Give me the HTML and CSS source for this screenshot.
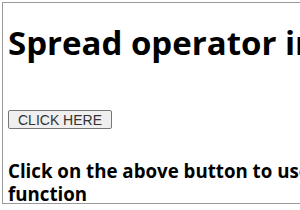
FILE: index.html
```html
<!DOCTYPE html>
<html lang="en">
<head>
    <meta charset="UTF-8">
    <title>Spread operator in function</title>
    <link rel="stylesheet" href="styles.css">
</head>
<body>
    <div class="frame">
        <h1>Spread operator in JavaScript</h1>
        <button class="btn">CLICK HERE</button>
        <h3>Click on the above button to use spread operator in function</h3>
    </div>
</body>
</html>
```

FILE: styles.css
```css
* {
    box-sizing: border-box;
}

body {
    margin: 0;
    background-color: #fff;
    font-family: "Open Sans", "Noto Sans", sans-serif;
    overflow: hidden;
}

.frame {
    margin: 2px 0 0 2px;
    width: 560px;
    height: 202px;
    border: 1px solid #9a9a9a;
    border-right: none;
    padding: 0 0 0 5px;
    overflow: hidden;
}

h1 {
    margin: 17px 0 0;
    font-size: 33px;
    font-weight: 700;
    white-space: nowrap;
    color: #000;
}

.btn {
    margin-top: 45px;
    padding: 1px 9px;
    height: 19px;
    font-family: "Liberation Sans", Arial, sans-serif;
    font-size: 14px;
    color: #333;
    background-color: #efefef;
    border: 1px solid #767676;
    border-radius: 2px;
}

h3 {
    margin: 29px 0 0;
    width: 530px;
    font-size: 18.7px;
    line-height: 23px;
    font-weight: 700;
    color: #000;
}
```
